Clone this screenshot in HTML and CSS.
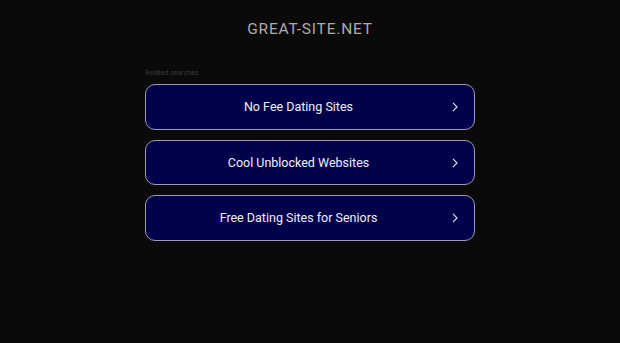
FILE: index.html
```html
<!DOCTYPE html>
<html>
<head>
<meta charset="utf-8">
<link rel="stylesheet" href="styles.css">
</head>
<body>
<header class="header">GREAT-SITE.NET</header>
<main class="main">
  <div class="label">Related searches</div>
  <ul class="list">
    <li><a class="item" href="#"><span>No Fee Dating Sites</span><svg class="chev" viewBox="0 0 10 14" width="8" height="12"><path d="M2.5 1.8 L7.5 7 L2.5 12.2" fill="none" stroke="currentColor" stroke-width="1.5"/></svg></a></li>
    <li><a class="item" href="#"><span>Cool Unblocked Websites</span><svg class="chev" viewBox="0 0 10 14" width="8" height="12"><path d="M2.5 1.8 L7.5 7 L2.5 12.2" fill="none" stroke="currentColor" stroke-width="1.5"/></svg></a></li>
    <li><a class="item" href="#"><span>Free Dating Sites for Seniors</span><svg class="chev" viewBox="0 0 10 14" width="8" height="12"><path d="M2.5 1.8 L7.5 7 L2.5 12.2" fill="none" stroke="currentColor" stroke-width="1.5"/></svg></a></li>
  </ul>
</main>
</body>
</html>
```
FILE: styles.css
```css
html, body {
  margin: 0;
  padding: 0;
  background: #0a0a0a;
  font-family: Roboto, "Liberation Sans", Arial, sans-serif;
}
.header {
  text-align: center;
  color: #ababab;
  font-size: 15.5px;
  font-weight: 400;
  letter-spacing: 0.8px;
  padding-top: 21px;
  line-height: 17px;
}
.main {
  width: 330px;
  margin: 0 auto;
  padding-top: 31px;
}
.label {
  color: #3a3a3a;
  font-size: 7px;
  line-height: 9px;
  margin-bottom: 6px;
}
.list {
  list-style: none;
  margin: 0;
  padding: 0;
  display: flex;
  flex-direction: column;
  gap: 10px;
}
.item {
  position: relative;
  display: flex;
  align-items: center;
  justify-content: center;
  height: 43.5px;
  padding-right: 23px;
  border: 1px solid #9a9ab8;
  border-radius: 10px;
  background: #02024a;
  color: #eeeefa;
  font-size: 12.5px;
  font-weight: 400;
  letter-spacing: 0;
  text-decoration: none;
}
.chev {
  position: absolute;
  right: 15px;
  top: 16px;
  color: #d8d8f0;
}
```
